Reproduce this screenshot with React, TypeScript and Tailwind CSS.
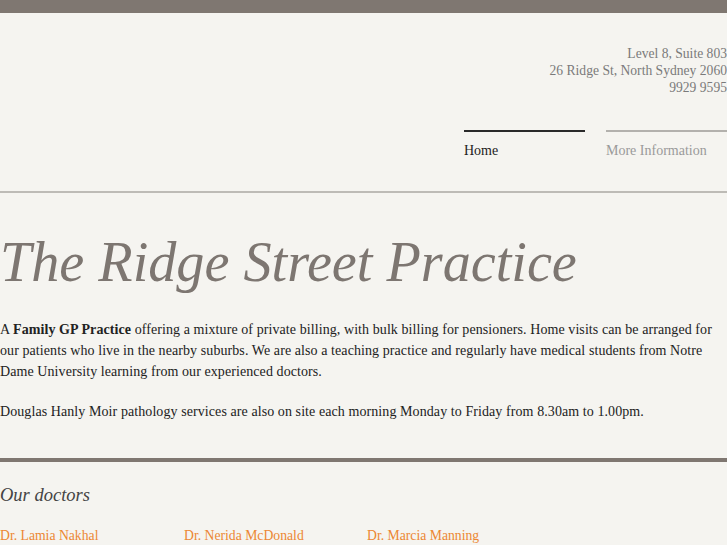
import React from 'react';

const doctors = ['Dr. Lamia Nakhal', 'Dr. Nerida McDonald', 'Dr. Marcia Manning'];

const App: React.FC = () => {
  return (
    <div className="min-h-[545px] bg-[#f5f4f0] font-['Liberation_Serif',serif] overflow-hidden">
      <div className="h-[13px] bg-[#7f7771]"></div>

      <header className="border-b-2 border-[#bdbbb6]">
        <div className="pt-[32px] text-right text-[13.6px] leading-[17px] text-[#7a7a7a]">
          <p>Level 8, Suite 803</p>
          <p>26 Ridge St, North Sydney 2060</p>
          <p>9929 9595</p>
        </div>
        <nav className="flex justify-end gap-[21px] mt-[34px]">
          <a className="w-[121px] border-t-2 border-[#2a2a2a] pt-[10px] pb-[31px] text-[14px] leading-[18px] text-[#222]">
            Home
          </a>
          <a className="w-[121px] border-t-2 border-[#b3b1ad] pt-[10px] pb-[31px] text-[14px] leading-[18px] text-[#9a9a9a]">
            More Information
          </a>
        </nav>
      </header>

      <main>
        <h1 className="mt-[37px] text-[56.2px] leading-[64px] italic text-[#7d7671]">
          The Ridge Street Practice
        </h1>
        <div className="mt-[25px] text-[14px] leading-[21px] tracking-[0.08px] text-[#222]">
          <p>
            A <strong>Family GP Practice</strong> offering a mixture of private billing, with bulk billing for pensioners. Home visits can be arranged for our patients who live in the nearby suburbs. We are also a teaching practice and regularly have medical students from Notre Dame University learning from our experienced doctors.
          </p>
          <p className="mt-[19px]">
            Douglas Hanly Moir pathology services are also on site each morning Monday to Friday from 8.30am to 1.00pm.
          </p>
        </div>
      </main>

      <section className="mt-[36px] border-t-4 border-[#7f7771]">
        <h2 className="mt-[21px] text-[18.5px] leading-[24px] italic text-[#444]">Our doctors</h2>
        <div className="mt-[20px] grid grid-cols-[184px_183px_183px] text-[13.7px] leading-[18px] text-[#ec8733]">
          {doctors.map((d) => (
            <a key={d}>{d}</a>
          ))}
        </div>
      </section>
    </div>
  );
};

export default App;
